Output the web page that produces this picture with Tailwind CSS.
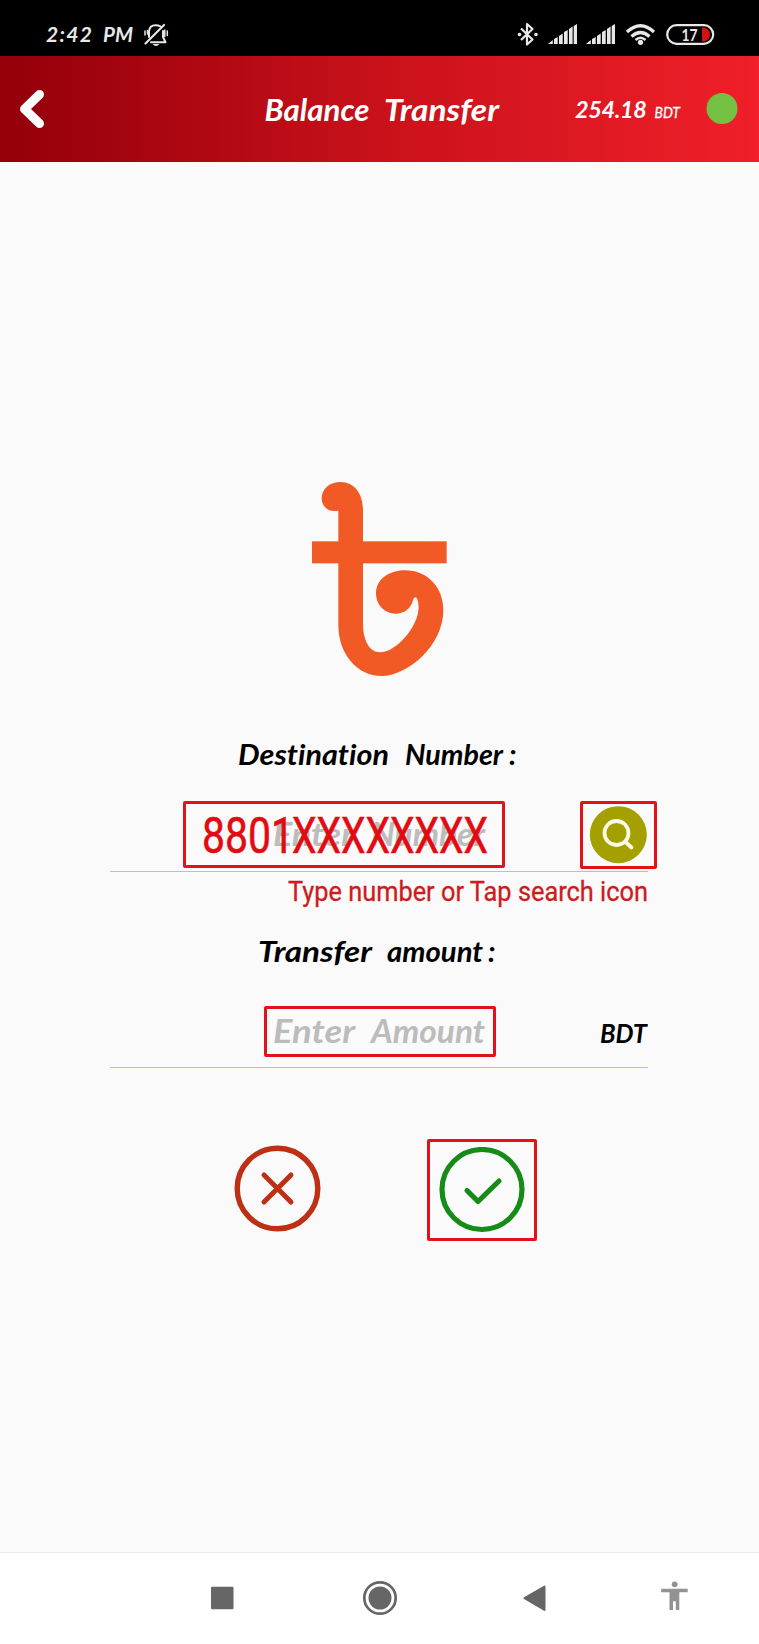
<!DOCTYPE html>
<html lang="en">
<head>
<meta charset="utf-8">
<title>Balance Transfer</title>
<script src="https://cdn.jsdelivr.net/npm/@tailwindcss/browser@4"></script>
</head>
<body class="bg-[#fafafa]">
<div class="flex flex-col w-[759px] h-[1644px] overflow-hidden font-['Lato',sans-serif] [font-variant-ligatures:none]">

  <!-- status bar -->
  <div class="h-[56px] shrink-0 bg-black flex justify-between">
    <svg class="block" width="200" height="56" viewBox="0 0 200 56">
      <g fill="#e8e8e8" font-size="21" font-weight="700" font-style="italic">
        <text x="46" y="42" textLength="46" lengthAdjust="spacing">2:42</text>
        <text x="103" y="42" textLength="30" lengthAdjust="spacingAndGlyphs">PM</text>
      </g>
      <g fill="none" stroke="#e8e8e8" stroke-width="2" stroke-linecap="round" stroke-linejoin="round">
        <path d="M149 37V31.500Q149.500 25.200 155.500 25.200Q158.500 25.200 160.500 26.500M163 31V37L165.500 42.300H151"/>
        <path d="M164 25L145.500 43.500" stroke-width="2.200"/>
        <path d="M145 31V35M147.500 30.500V34M164.800 30V36.500M167.300 31V35.500" stroke-width="1.500"/>
        <path d="M152.500 44H159.500Q156 48 152.500 44Z" fill="#e8e8e8" stroke="none"/>
      </g>
    </svg>
    <svg class="block" width="259" height="56" viewBox="500 0 259 56">
      <g fill="none" stroke="#e8e8e8" stroke-width="2.200" stroke-linejoin="round">
        <path d="M521 28.500L532.500 39.500L527 44.500V24L532.500 29L521 40"/>
      </g>
      <g fill="#e8e8e8">
        <circle cx="519.500" cy="34.500" r="1.800"/><circle cx="536" cy="34.500" r="1.800"/>
        <path id="sig" d="M548 44L552.800 40V44ZM554 39L557.700 37V44H554ZM559 36L562.700 33.500V44H559ZM564 32L567.700 30V44H564ZM569 29L572.600 26.500V44H569ZM573.700 26L577 24V44H573.700Z"/>
        <use href="#sig" x="38"/>
        <circle cx="640.500" cy="42.300" r="2.600"/>
      </g>
      <g fill="none" stroke="#e8e8e8" stroke-width="3.200">
        <path d="M627 32Q640.500 19.500 654 32M631.500 36.500Q640.500 28.500 649.500 36.500"/>
        <path d="M635.500 40Q640.500 35.500 645.500 40" stroke-width="2.500"/>
      </g>
      <rect x="667.200" y="25.200" width="46" height="18.600" rx="9.300" fill="none" stroke="#e8e8e8" stroke-width="2.200"/>
      <path d="M702 27.500H704.500Q710 29.500 710 34.500Q710 39.500 704.500 41.500H702Z" fill="#d31313"/>
      <text x="681.500" y="41" textLength="16" lengthAdjust="spacingAndGlyphs" fill="#e8e8e8" font-size="17.500" font-weight="700">17</text>
    </svg>
  </div>

  <!-- header -->
  <div class="h-[106px] shrink-0 bg-linear-to-r from-[#93000a] via-[#c9111a] to-[#f01f29]">
    <svg class="block" width="759" height="106" viewBox="0 56 759 106">
      <path d="M39.500 94.500L24.500 109L39.500 123.500" fill="none" stroke="#fff" stroke-width="9" stroke-linecap="round" stroke-linejoin="round"/>
      <g fill="#fff" font-style="italic">
        <g font-size="30" font-weight="700">
          <text x="264.500" y="120.500" textLength="105" lengthAdjust="spacingAndGlyphs">Balance</text>
          <text x="384" y="120.500" textLength="115" lengthAdjust="spacingAndGlyphs">Transfer</text>
        </g>
        <text x="575" y="118" textLength="72" lengthAdjust="spacing" font-size="23.500" font-weight="700">254.18</text>
        <text x="654.500" y="118" textLength="25.500" lengthAdjust="spacingAndGlyphs" font-size="15.500" stroke="#fff" stroke-width="0.300">BDT</text>
      </g>
      <circle cx="722" cy="108.500" r="15.500" fill="#74c043"/>
    </svg>
  </div>

  <main class="grow flex flex-col items-center pt-[318px] pr-px">
    <!-- taka sign -->
    <svg class="block" width="138" height="198" viewBox="60 60 414 594" fill="#f15a25">
      <path d="M145 152Q141 153 132 153C110 153 95 136 95 115C95 86 120 66 152 66C192 66 219 100 219 150V490C219 545 240 577 270 577C318 577 386 500 386 440Q384 412 376 412Q371 412 369 421C363 444 345 461 318 461C283 461 258 434 258 400C258 360 295 331 345 331C415 331 460 385 460 450C460 560 350 648 275 648C200 648 145 580 145 495Z"/>
      <rect x="66" y="244" width="404" height="66"/>
    </svg>

    <!-- destination number -->
    <svg class="block mt-[42px]" width="538" height="60" viewBox="110 720 538 60">
      <g font-size="29" font-weight="700" font-style="italic">
        <text x="238" y="765" textLength="151" lengthAdjust="spacingAndGlyphs">Destination</text>
        <text x="405" y="765" textLength="98" lengthAdjust="spacingAndGlyphs">Number</text>
        <text x="509" y="765">:</text>
      </g>
    </svg>
    <div class="relative w-[538px] h-[92px] border-b-[1.5px] border-[#cfc573]">
      <svg class="block overflow-visible" width="538" height="91" viewBox="110 780 538 91">
        <g font-size="33" font-weight="700" font-style="italic" fill="#bcbcbc">
          <text x="273" y="846" textLength="81" lengthAdjust="spacingAndGlyphs">Enter</text>
          <text x="371" y="846" textLength="114" lengthAdjust="spacingAndGlyphs">Number</text>
        </g>
        <circle cx="618.300" cy="834.700" r="28.500" fill="#a4a000"/>
        <g fill="none" stroke="#fdfbe6" stroke-width="3.800" stroke-linecap="round">
          <circle cx="616.500" cy="833" r="12"/><path d="M626 842.500L631.500 847.500"/>
        </g>
        <g font-family="Roboto" font-size="50.500" fill="#e30b12" stroke="#e30b12" stroke-width="0.600">
          <text x="202" y="853" textLength="92" lengthAdjust="spacingAndGlyphs">8801</text>
          <text x="292" y="853" textLength="196" lengthAdjust="spacingAndGlyphs">XXXXXXXX</text>
        </g>
      </svg>
      <div class="absolute left-[73px] top-[21px] w-[322px] h-[67px] border-3 border-[#e31218] rounded-[2px]"></div>
      <div class="absolute left-[470px] top-[21px] w-[77px] h-[68px] border-3 border-[#e31218] rounded-[2px]"></div>
    </div>
    <svg class="block overflow-visible" width="538" height="48" viewBox="110 872 538 48">
      <text x="288" y="901" textLength="360" lengthAdjust="spacingAndGlyphs" font-family="Roboto" font-size="27.500" fill="#cd1b20" stroke="#cd1b20" stroke-width="0.300">Type number or Tap search icon</text>
    </svg>

    <!-- transfer amount -->
    <svg class="block" width="538" height="60" viewBox="110 920 538 60">
      <g font-size="29" font-weight="700" font-style="italic">
        <text x="258" y="962" textLength="114" lengthAdjust="spacingAndGlyphs">Transfer</text>
        <text x="387" y="962" textLength="96" lengthAdjust="spacingAndGlyphs">amount</text>
        <text x="488" y="962">:</text>
      </g>
    </svg>
    <div class="relative w-[538px] h-[88px] border-b-[1.5px] border-[#cfc573]">
      <svg class="block" width="538" height="87" viewBox="110 980 538 87">
        <g font-weight="700" font-style="italic">
          <g font-size="33" fill="#bcbcbc">
            <text x="273" y="1042.500" textLength="82" lengthAdjust="spacingAndGlyphs">Enter</text>
            <text x="371" y="1042.500" textLength="114" lengthAdjust="spacingAndGlyphs">Amount</text>
          </g>
          <text x="600" y="1042.500" textLength="47" lengthAdjust="spacingAndGlyphs" font-size="26">BDT</text>
        </g>
      </svg>
      <div class="absolute left-[154px] top-[26px] w-[232px] h-[51px] border-3 border-[#e31218] rounded-[2px]"></div>
    </div>

    <!-- actions -->
    <div class="flex w-[538px] mt-[71px] pl-[124px] gap-[106px] items-center">
      <svg class="block -mt-[3px]" width="87" height="87" viewBox="0 0 87 87" fill="none" stroke="#bd3013" stroke-linecap="round">
        <circle cx="43.500" cy="43.500" r="40.300" stroke-width="5.400"/>
        <path d="M30 30L57 57M57 30L30 57" stroke-width="5"/>
      </svg>
      <div class="w-[110px] h-[102px] border-3 border-[#e31218] rounded-[2px] flex items-center justify-center">
        <svg class="block" width="87" height="87" viewBox="0 0 87 87" fill="none" stroke="#168c18" stroke-linecap="round" stroke-linejoin="round">
          <circle cx="43" cy="42.500" r="40" stroke-width="5.200"/>
          <path d="M28 43.500L39 54.500L60 34" stroke-width="5.200"/>
        </svg>
      </div>
    </div>
  </main>

  <!-- navigation bar -->
  <div class="h-[92px] shrink-0 bg-white border-t border-[#ececec]">
    <svg class="block" width="759" height="91" viewBox="0 1553 759 91" fill="#666">
      <rect x="211" y="1586.700" width="22.500" height="22.500" rx="1"/>
      <circle cx="380" cy="1598" r="11.500"/>
      <circle cx="380" cy="1598" r="15.700" fill="none" stroke="#666" stroke-width="2.700"/>
      <path d="M524.500 1598.200L544.500 1586.500V1610Z" stroke="#666" stroke-width="2" stroke-linejoin="round"/>
      <g fill="#929292">
        <circle cx="674.700" cy="1584.300" r="2.900"/>
        <path d="M661.200 1588.700H687.700V1592.300H679.300V1610H675.800V1601.200H673V1610H669.500V1592.300H661.200Z"/>
      </g>
    </svg>
  </div>
</div>
</body>
</html>
